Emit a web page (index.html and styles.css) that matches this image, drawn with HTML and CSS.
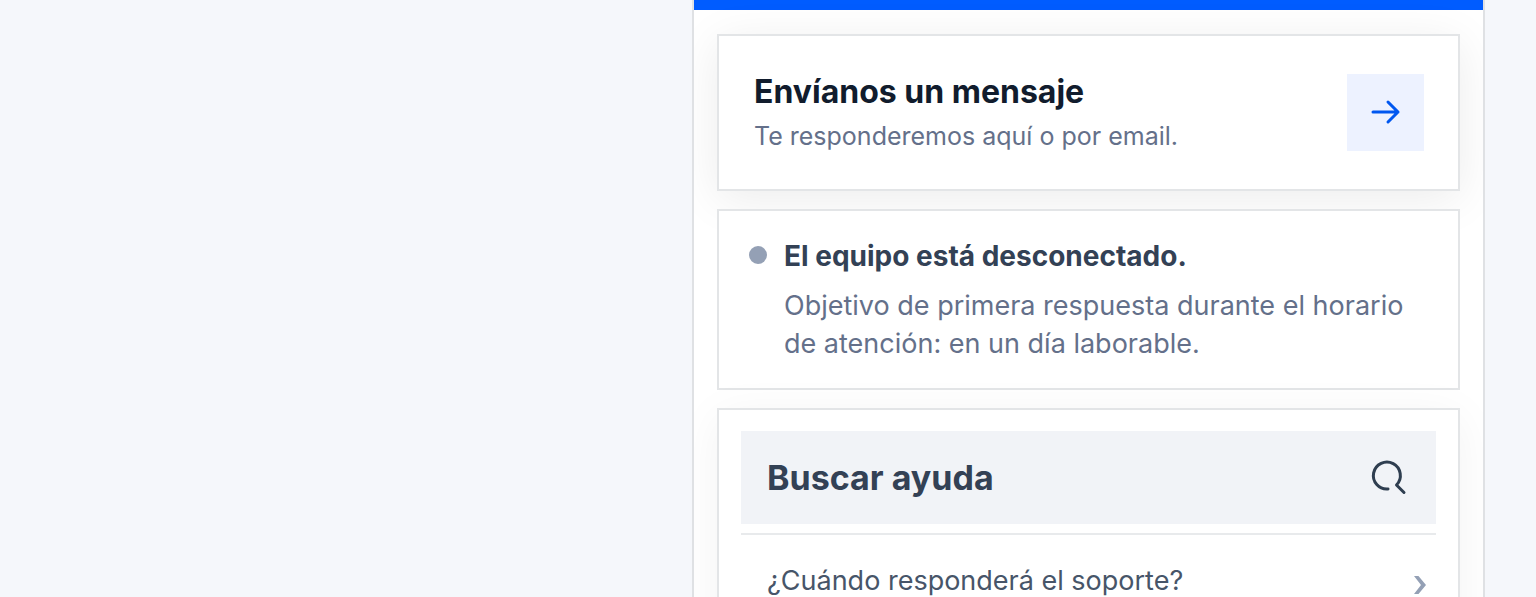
FILE: index.html
```html
<!doctype html>
<html lang="es">
<head>
  <meta charset="utf-8">
  <meta name="viewport" content="width=device-width, initial-scale=1">
  <title>Soporte</title>
  <link rel="stylesheet" href="styles.css">
</head>
<body>
  <main class="messenger">
    <header class="messenger-header"></header>

    <div class="messenger-body">
      <a class="card message-card" href="#mensaje">
        <span class="message-text">
          <strong class="message-title">Envíanos un mensaje</strong>
          <span class="message-subtitle">Te responderemos aquí o por email.</span>
        </span>
        <span class="message-arrow">
          <svg width="30" height="30" viewBox="0 0 30 30" aria-hidden="true">
            <path d="M2 14H27M17 4L27 14L17 24"/>
          </svg>
        </span>
      </a>

      <section class="card status-card">
        <span class="status-dot"></span>
        <div>
          <h2 class="status-title">El equipo está desconectado.</h2>
          <p class="status-text">Objetivo de primera respuesta durante el horario de atención: en un día laborable.</p>
        </div>
      </section>

      <section class="card help-card">
        <button class="search-button" type="button">
          Buscar ayuda
          <svg width="36" height="36" viewBox="0 0 36 36" aria-hidden="true">
            <path d="M16 29A13.500 13.500 0 1 1 24.500 25L32 32.500"/>
          </svg>
        </button>
        <ul class="article-list">
          <li>
            <a class="article-link" href="#respuesta">
              ¿Cuándo responderá el soporte?
              <svg width="12" height="26" viewBox="0 0 12 26" aria-hidden="true">
                <path d="M0 8H4.500L12 17L4.500 26H0L7 17Z"/>
              </svg>
            </a>
          </li>
        </ul>
      </section>
    </div>
  </main>
</body>
</html>
```
FILE: styles.css
```css
* {
  box-sizing: border-box;
}
body {
  margin: 0;
  height: 100vh;
  overflow: hidden;
  display: flex;
  justify-content: flex-end;
  padding-right: 51px;
  background-color: #f5f7fb;
  color: #334155;
  font-family: Inter, "Liberation Sans", sans-serif;
}
.messenger {
  width: 100%;
  max-width: 793px;
  background-color: #fff;
  border: solid #dfe1e4;
  border-width: 0 2px;
  overflow: hidden;
}
.messenger-header {
  height: 10px;
  background-color: #005cff;
}
.messenger-body {
  display: flex;
  flex-direction: column;
  gap: 18px;
  padding: 24px 23px 0;
}
.card {
  background-color: #fff;
  border: 2px solid #e3e5e7;
}

/* New message */
.message-card {
  display: flex;
  align-items: center;
  justify-content: space-between;
  padding: 34px 34px 34px 35px;
  color: inherit;
  text-decoration: none;
  box-shadow: 0 8px 44px rgba(0, 0, 0, 0.08);
}
.message-text {
  display: flex;
  flex-direction: column;
  gap: 4px;
}
.message-title {
  font-size: 32px;
  line-height: 43px;
  color: #111c2d;
}
.message-subtitle {
  font-size: 25px;
  line-height: 38px;
  color: #64708a;
}
.message-arrow {
  display: flex;
  align-items: center;
  justify-content: center;
  width: 77px;
  height: 77px;
  background-color: #edf2ff;
}
.message-arrow svg {
  fill: none;
  stroke: #0057f0;
  stroke-width: 3;
  stroke-linecap: round;
  stroke-linejoin: round;
}

/* Team status */
.status-card {
  display: flex;
  gap: 17px;
  padding: 26px 30px 25px;
}
.status-dot {
  flex: none;
  width: 18px;
  height: 18px;
  margin-top: 9px;
  border-radius: 50%;
  background-color: #94a0b5;
}
.status-title {
  margin: 0 0 12px;
  font-size: 28px;
  line-height: 38px;
}
.status-text {
  margin: 0;
  font-size: 27px;
  line-height: 38px;
  color: #64708a;
}

/* Help articles */
.help-card {
  padding: 21px 22px;
  box-shadow: 0 8px 44px rgba(0, 0, 0, 0.05);
}
.search-button {
  display: flex;
  align-items: center;
  justify-content: space-between;
  width: 100%;
  height: 93px;
  padding: 0 28px 0 26px;
  border: none;
  background-color: #f1f3f7;
  color: #334155;
  font-family: inherit;
  font-size: 34px;
  font-weight: bold;
  cursor: pointer;
}
.search-button svg {
  overflow: visible;
  fill: none;
  stroke: #2f3e50;
  stroke-width: 3;
  stroke-linecap: round;
  stroke-linejoin: round;
}
.article-list {
  list-style: none;
  margin: 9px 0 0;
  padding: 0;
  border-top: 2px solid #e8eaec;
}
.article-link {
  display: flex;
  align-items: center;
  justify-content: space-between;
  padding: 26px 10px 26px 26px;
  font-size: 27px;
  line-height: 40px;
  color: #475569;
  text-decoration: none;
}
.article-link svg {
  fill: #94a0b5;
}
```
